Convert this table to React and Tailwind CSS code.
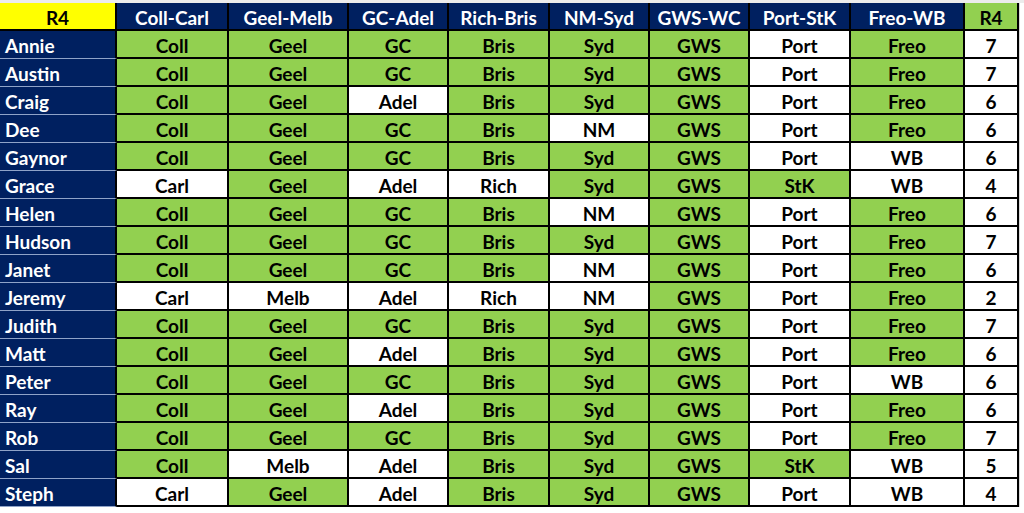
import React from "react";

const winners = new Set(["Coll", "Geel", "GC", "Bris", "Syd", "GWS", "StK", "Freo"]);
const headers = ["Coll-Carl", "Geel-Melb", "GC-Adel", "Rich-Bris", "NM-Syd", "GWS-WC", "Port-StK", "Freo-WB"];

const rows = [
  ["Annie", "Coll", "Geel", "GC", "Bris", "Syd", "GWS", "Port", "Freo", 7],
  ["Austin", "Coll", "Geel", "GC", "Bris", "Syd", "GWS", "Port", "Freo", 7],
  ["Craig", "Coll", "Geel", "Adel", "Bris", "Syd", "GWS", "Port", "Freo", 6],
  ["Dee", "Coll", "Geel", "GC", "Bris", "NM", "GWS", "Port", "Freo", 6],
  ["Gaynor", "Coll", "Geel", "GC", "Bris", "Syd", "GWS", "Port", "WB", 6],
  ["Grace", "Carl", "Geel", "Adel", "Rich", "Syd", "GWS", "StK", "WB", 4],
  ["Helen", "Coll", "Geel", "GC", "Bris", "NM", "GWS", "Port", "Freo", 6],
  ["Hudson", "Coll", "Geel", "GC", "Bris", "Syd", "GWS", "Port", "Freo", 7],
  ["Janet", "Coll", "Geel", "GC", "Bris", "NM", "GWS", "Port", "Freo", 6],
  ["Jeremy", "Carl", "Melb", "Adel", "Rich", "NM", "GWS", "Port", "Freo", 2],
  ["Judith", "Coll", "Geel", "GC", "Bris", "Syd", "GWS", "Port", "Freo", 7],
  ["Matt", "Coll", "Geel", "Adel", "Bris", "Syd", "GWS", "Port", "Freo", 6],
  ["Peter", "Coll", "Geel", "GC", "Bris", "Syd", "GWS", "Port", "WB", 6],
  ["Ray", "Coll", "Geel", "Adel", "Bris", "Syd", "GWS", "Port", "Freo", 6],
  ["Rob", "Coll", "Geel", "GC", "Bris", "Syd", "GWS", "Port", "Freo", 7],
  ["Sal", "Coll", "Melb", "Adel", "Bris", "Syd", "GWS", "StK", "WB", 5],
  ["Steph", "Carl", "Geel", "Adel", "Bris", "Syd", "GWS", "Port", "WB", 4],
];

export default function App() {
  return (
    <div
      className="w-[1024px] h-[513px] overflow-hidden bg-white"
      style={{ fontFamily: "Lato, 'Open Sans', sans-serif" }}
    >
      <div className="h-[3px] bg-[#ececec]" />
      <div className="flex">
        <div className="grid grid-cols-[117px_112px_120px_100px_101px_100px_100px_101px_114px_54px] w-[1019px] font-bold text-[19px] leading-none">
          {/* header */}
          <div className="h-[28px] pt-[2px] bg-[#ffff00] text-black flex items-center justify-center border-r-2 border-b-2 border-black">R4</div>
          {headers.map((h) => (
            <div key={h} className="h-[28px] pt-[2px] bg-[#002060] text-white flex items-center justify-center border-r-2 border-b-2 border-black">
              {h}
            </div>
          ))}
          <div className="h-[28px] pt-[2px] bg-[#92d050] text-black flex items-center justify-center border-r-2 border-b-2 border-black">R4</div>
          {rows.map((r) => (
            <React.Fragment key={r[0]}>
              <div className="h-[28px] pt-[2px] bg-[#002060] text-white flex items-center pl-[5px] border-r-2 border-black border-b border-b-[#8fa3c8]">
                {r[0]}
              </div>
              {r.slice(1, 9).map((p, i) => (
                <div
                  key={i}
                  className={
                    "h-[28px] pt-[2px] text-black flex items-center justify-center border-r-2 border-b-2 border-black " +
                    (winners.has(p) ? "bg-[#92d050]" : "bg-white")
                  }
                >
                  {p}
                </div>
              ))}
              <div className="h-[28px] pt-[2px] bg-white text-black flex items-center justify-center border-r-2 border-b-2 border-black">
                {r[9]}
              </div>
            </React.Fragment>
          ))}
        </div>
        <div className="flex-1 border-l border-[#d9d9d9]" />
      </div>
    </div>
  );
}
